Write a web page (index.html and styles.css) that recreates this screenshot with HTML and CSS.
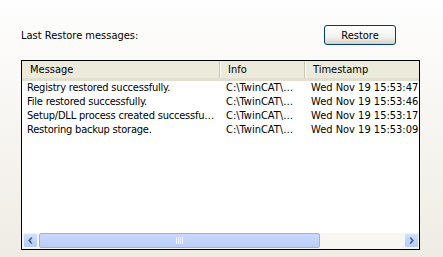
FILE: index.html
```html
<!DOCTYPE html>
<html lang="en">
<head>
	<meta charset="UTF-8">
	<title>Restore</title>
	<link rel="stylesheet" href="styles.css">
</head>
<body>
<div class="panel">
	<div class="top">
		<span class="label">Last Restore messages:</span>
		<button class="btn">Restore</button>
	</div>
	<div class="list">
		<div class="head">
			<div class="hc c1">Message</div>
			<div class="hc c2">Info</div>
			<div class="hc c3">Timestamp</div>
		</div>
		<div class="rows">
			<div class="row"><span class="c1">Registry restored successfully.</span><span class="c2">C:\TwinCAT\…</span><span class="c3">Wed Nov 19 15:53:47</span></div>
			<div class="row"><span class="c1">File restored successfully.</span><span class="c2">C:\TwinCAT\…</span><span class="c3">Wed Nov 19 15:53:46</span></div>
			<div class="row"><span class="c1">Setup/DLL process created successfu…</span><span class="c2">C:\TwinCAT\…</span><span class="c3">Wed Nov 19 15:53:17</span></div>
			<div class="row"><span class="c1">Restoring backup storage.</span><span class="c2">C:\TwinCAT\…</span><span class="c3">Wed Nov 19 15:53:09</span></div>
		</div>
		<div class="hscroll">
			<div class="arrow">
				<svg width="15" height="15" viewBox="0 0 15 15"><path d="M9 4 L6 7.5 L9 11" fill="none" stroke="#4d6185" stroke-width="2"/></svg>
			</div>
			<div class="thumb">
				<svg width="8" height="7" viewBox="0 0 8 7"><path d="M0.5 0V7M2.5 0V7M4.5 0V7M6.5 0V7" stroke="#eef4fe" stroke-width="1"/></svg>
			</div>
			<div class="track"></div>
			<div class="arrow">
				<svg width="15" height="15" viewBox="0 0 15 15"><path d="M6 4 L9 7.5 L6 11" fill="none" stroke="#4d6185" stroke-width="2"/></svg>
			</div>
		</div>
	</div>
</div>
</body>
</html>
```
FILE: styles.css
```css
*{
	padding: 0;
	margin: 0;
	box-sizing: border-box;
}
body{
	width: 443px;
	height: 257px;
	overflow: hidden;
	background: linear-gradient(to bottom, #fefefe, #efece4);
	font-family: "DejaVu Sans Condensed", "DejaVu Sans", sans-serif;
	font-size: 11px;
	color: #000;
}
.panel{
	padding: 25px 0 0 21px;
}
.top{
	display: flex;
	align-items: center;
	height: 20px;
	width: 375px;
	justify-content: space-between;
}
.btn{
	width: 72px;
	height: 20px;
	border: 1px solid #003c74;
	border-radius: 3px;
	background: linear-gradient(to bottom, #ffffff, #f3f3ef 60%, #d6d0c5);
	font: inherit;
	color: #000;
}
.list{
	margin-top: 15px;
	width: 399px;
	height: 190px;
	border: 1px solid #000;
	background: #fff;
	display: flex;
	flex-direction: column;
	overflow: hidden;
}
.head{
	display: flex;
	height: 20px;
	background: #ebeadb;
	border-bottom: 3px solid #e2dfce;
	flex-shrink: 0;
}
.hc{
	padding-left: 8px;
	line-height: 18px;
	border-right: 1px solid #c7c5b2;
	box-shadow: 1px 0 0 #fff;
	flex-shrink: 0;
}
.hc.c3{
	border-right: none;
	box-shadow: none;
}
.c1{ width: 198px; }
.c2{ width: 85px; }
.c3{ width: 112px; }
.rows{
	flex: 1;
}
.row{
	display: flex;
	height: 14px;
	line-height: 14px;
	white-space: nowrap;
}
.row span{
	flex-shrink: 0;
	padding-left: 6px;
}
.row span.c1{
	padding-left: 5px;
	letter-spacing: -0.2px;
}
.hscroll{
	display: flex;
	height: 16px;
	padding: 0 0 1px 0;
	background: #f7f6f1;
	flex-shrink: 0;
}
.arrow{
	width: 15px;
	height: 15px;
	border: 1px solid #f0f4fd;
	border-radius: 2px;
	background: linear-gradient(to bottom, #d0dffb, #b5cbf7);
	display: flex;
	align-items: center;
	justify-content: center;
	flex-shrink: 0;
	margin-left: 1px;
}
.arrow svg{
	display: block;
}
.thumb{
	width: 281px;
	height: 15px;
	margin-left: 1px;
	border: 1px solid #98b1e8;
	border-radius: 2px;
	background: linear-gradient(to bottom, #cad9fb, #b9cdf8);
	display: flex;
	align-items: center;
	justify-content: center;
}
.track{
	flex: 1;
}
```
